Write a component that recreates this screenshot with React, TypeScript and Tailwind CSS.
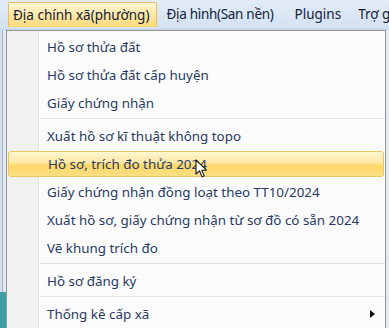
import React from "react";

const items: (string | null)[] = [
  "Hồ sơ thửa đất",
  "Hồ sơ thửa đất cấp huyện",
  "Giấy chứng nhận",
  null,
  "Xuất hồ sơ kĩ thuật không topo",
  "Hồ sơ, trích đo thửa 2024",
  "Giấy chứng nhận đồng loạt theo TT10/2024",
  "Xuất hồ sơ, giấy chứng nhận từ sơ đồ có sẵn 2024",
  "Vẽ khung trích đo",
  null,
  "Hồ sơ đăng ký",
  null,
  "Thống kê cấp xã",
];

function Cursor() {
  return (
    <svg width="13" height="20" viewBox="0 0 13 20" className="absolute left-[195px] top-[159px]">
      <path d="M1 1 L1 15 L4.5 11.8 L7 17.8 L9.2 16.9 L6.8 11.2 L11.5 11.2 Z" fill="#ffffff" stroke="#1a1a1a" strokeWidth="1.1" strokeLinejoin="round" />
    </svg>
  );
}

export default function App() {
  return (
    <div className="relative w-[389px] h-[328px] overflow-hidden bg-[#e8ecf1] font-['Noto_Sans','Open_Sans',sans-serif]">
      <div className="flex h-[30px] items-center bg-[linear-gradient(to_bottom,#e3ecf7,#d3e1f2)] border-b border-[#c3d2e6] pl-[8px] text-[13.5px] text-[#15213a] whitespace-nowrap">
        <div className="h-[25px] flex items-center pl-[4px] pr-[7px] rounded-t-[2px] border border-b-0 border-[#e2c06a] bg-[linear-gradient(to_bottom,#fff6d4,#fde6a0_55%,#fbd97a)]">
          Địa chính xã(phường)
        </div>
        <div className="ml-[8px] px-[1px] tracking-[-0.3px]">Địa hình(San nền)</div>
        <div className="ml-[20px]">Plugins</div>
        <div className="ml-[17px]">Trợ giúp</div>
      </div>
      <div className="flex">
        <div className="w-[6px] h-[298px] flex flex-col">
          <div className="flex-1 bg-[linear-gradient(to_right,#d6dfeb_0,#d6dfeb_2px,#9fb3cc_2px,#9fb3cc_3px,#e6ebf1_3px)]" />
          <div className="h-[36px] bg-[#3f9ea3]" />
        </div>
        <div className="w-[380px] h-[302px] border border-[#979797] bg-[linear-gradient(to_right,#f1f1f1_0,#f1f1f1_31px,#e2e3e3_31px,#e2e3e3_32px,#ffffff_32px,#ffffff_33px,#fbfbfb_33px)] pt-[2px] text-[13.4px] text-[#283a62] whitespace-nowrap">
          {items.map((it, i) =>
            it === null ? (
              <div key={i} className="pl-[33px] pt-[1px] pb-[2px]">
                <div className="h-px bg-[#e0e0e0]" />
                <div className="h-px bg-white" />
              </div>
            ) : it === "Hồ sơ, trích đo thửa 2024" ? (
              <div key={i} className="h-[28px] py-[1px] px-[1px]">
                <div className="h-full flex items-center pl-[39px] rounded-[3px] border border-[#e7c666] bg-[linear-gradient(to_bottom,#fff7d2,#fde7a2_45%,#fcd867_55%,#fbde84)]">
                  {it}
                </div>
              </div>
            ) : it === "Thống kê cấp xã" ? (
              <div key={i} className="h-[28px] flex items-center pl-[40px] pr-[10px]">
                <span className="flex-1">{it}</span>
                <svg width="5" height="8" viewBox="0 0 5 8"><path d="M0 0 L5 4 L0 8 Z" fill="#111" /></svg>
              </div>
            ) : (
              <div key={i} className="h-[28px] flex items-center pl-[40px]">
                {it}
              </div>
            )
          )}
        </div>
        <div className="flex-1 bg-[#e6eaef]" />
      </div>
      <Cursor />
    </div>
  );
}
